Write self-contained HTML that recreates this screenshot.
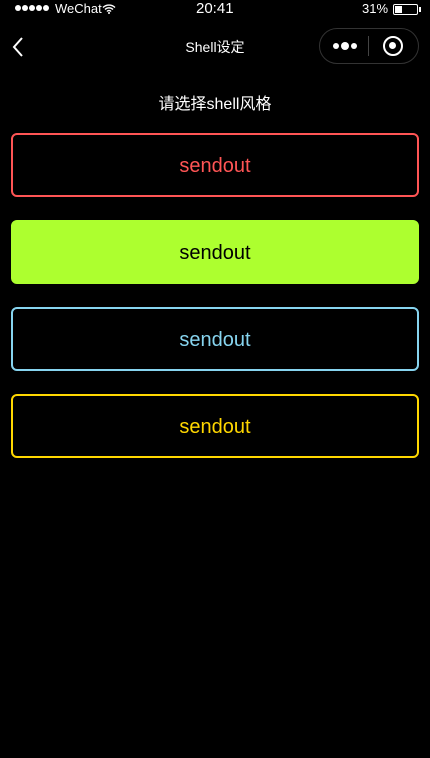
<!DOCTYPE html>
<html><head><meta charset="utf-8"><style>
*{margin:0;padding:0;box-sizing:border-box}
body{width:430px;height:758px;background:#000;color:#fff;font-family:"Liberation Sans","Noto Sans CJK SC",sans-serif;position:relative;overflow:hidden}
.abs{position:absolute}
.box{position:absolute;left:11px;width:408px;height:64px;border-radius:6px;border:2px solid;display:flex;align-items:center;justify-content:center;font-size:20px;padding-top:2px}
.d{position:absolute;top:5px;width:6px;height:6px;border-radius:50%;background:#fff}
</style></head><body>
<div class="d" style="left:15px"></div><div class="d" style="left:22px"></div><div class="d" style="left:29px"></div><div class="d" style="left:36px"></div><div class="d" style="left:43px"></div>
<div class="abs" style="left:55px;top:1px;font-size:13px;">WeChat</div>
<svg class="abs" style="left:102px;top:4px" width="14" height="10" viewBox="0 0 14 10"><path d="M1 3.5a8.5 8.5 0 0 1 12 0M3 5.5a5.5 5.5 0 0 1 8 0M5 7.5a2.5 2.5 0 0 1 4 0" stroke="#fff" stroke-width="1.4" fill="none"/><circle cx="7" cy="9" r="1" fill="#fff"/></svg>
<div class="abs" style="left:196px;top:0px;font-size:15px;">20:41</div>
<div class="abs" style="left:362px;top:1px;font-size:13px;">31%</div>
<div class="abs" style="left:393px;top:4px;width:25px;height:11px;border:1px solid #fff;border-radius:2px"><div style="position:absolute;left:1px;top:1px;width:7px;height:7px;background:#fff"></div></div>
<div class="abs" style="left:419px;top:7px;width:2px;height:5px;background:#fff"></div>
<svg class="abs" style="left:11px;top:36px" width="14" height="22" viewBox="0 0 14 22"><path d="M11 2L3 11l8 9" stroke="#fff" stroke-width="2" fill="none"/></svg>
<div class="abs" style="left:0;width:430px;top:37px;text-align:center;font-size:14px;">Shell设定</div>
<div class="abs" style="left:319px;top:28px;width:100px;height:36px;border:1px solid #333;border-radius:18px"></div>
<div class="abs" style="left:333px;top:43px;width:6px;height:6px;border-radius:50%;background:#fff"></div>
<div class="abs" style="left:341px;top:42px;width:8px;height:8px;border-radius:50%;background:#fff"></div>
<div class="abs" style="left:351px;top:43px;width:6px;height:6px;border-radius:50%;background:#fff"></div>
<div class="abs" style="left:368px;top:36px;width:1px;height:20px;background:#444"></div>
<div class="abs" style="left:383px;top:36px;width:20px;height:20px;border:2.5px solid #fff;border-radius:50%"><div style="position:absolute;left:4px;top:4px;width:7px;height:7px;border-radius:50%;background:#fff"></div></div>
<div class="abs" style="left:0;width:430px;top:90px;text-align:center;font-size:16px;">请选择shell风格</div>
<div class="box" style="top:133px;border-color:#f55;color:#f55">sendout</div>
<div class="box" style="top:220px;border-color:#adff2f;background:#adff2f;color:#000">sendout</div>
<div class="box" style="top:307px;border-color:#87d4ef;color:#87d4ef">sendout</div>
<div class="box" style="top:394px;border-color:#ffd700;color:#ffd700">sendout</div>
</body></html>
